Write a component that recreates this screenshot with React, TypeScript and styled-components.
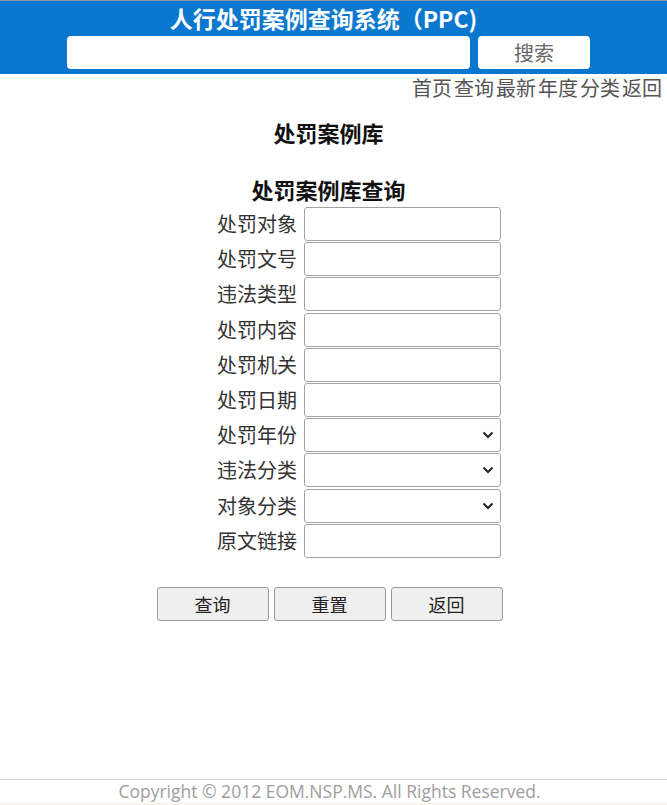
import React from "react";
import styled, { createGlobalStyle } from "styled-components";

const GlobalStyle = createGlobalStyle`
  html, body { margin: 0; padding: 0; background: #fff; }
  body { font-family: "Noto Sans CJK SC", "Noto Sans", sans-serif; }
  * { box-sizing: border-box; }
`;

const Page = styled.div`
  min-height: 100vh;
  display: flex;
  flex-direction: column;
`;

const Header = styled.header`
  background: #0a78cf;
  border-top: 1px solid #8a99a6;
  padding: 3px 0 5px;
`;

const Title = styled.h1`
  margin: 0;
  color: #fff;
  font-size: 23px;
  font-weight: 700;
  line-height: 29px;
  text-align: center;
  padding-right: 20px;
`;

const SearchRow = styled.div`
  display: flex;
  justify-content: center;
  gap: 8px;
  margin-top: 3px;
  padding-right: 10px;
`;

const SearchInput = styled.input`
  width: 403px;
  height: 33px;
  border: none;
  border-radius: 4px;
  background: #fff;
  outline: none;
`;

const SearchButton = styled.button`
  width: 112px;
  height: 33px;
  border: none;
  border-radius: 4px;
  background: #fff;
  color: #666;
  font-family: inherit;
  font-size: 20px;
  line-height: 33px;
  padding: 0;
`;

const Nav = styled.nav`
  display: flex;
  justify-content: flex-end;
  gap: 2px;
  padding-right: 5px;
  line-height: 28px;
`;

const NavLink = styled.a`
  color: #555;
  font-size: 20px;
  text-decoration: none;
`;

const Heading = styled.h2<{ $top: number }>`
  margin: ${(p) => p.$top}px 0 0;
  font-size: 22px;
  font-weight: 700;
  line-height: 30px;
  text-align: center;
  color: #111;
  padding-right: 10px;
`;

const Form = styled.form`
  display: grid;
  grid-template-columns: 1fr 197px 159px;
  column-gap: 7px;
  row-gap: 1.2px;
  margin-top: 3px;
`;

const Label = styled.label`
  grid-column: 1;
  text-align: right;
  font-size: 20px;
  line-height: 34px;
  color: #333;
`;

const Field = styled.div`
  grid-column: 2;
  position: relative;
  height: 34px;
`;

const TextInput = styled.input`
  width: 100%;
  height: 100%;
  border: 1px solid #a3a3a3;
  border-radius: 3px;
  background: #fff;
  outline: none;
`;

const Select = styled.select`
  width: 100%;
  height: 100%;
  border: 1px solid #a3a3a3;
  border-radius: 3px;
  background: #fff;
  appearance: none;
  outline: none;
`;

const Chevron = styled.svg`
  position: absolute;
  right: 7px;
  top: 13px;
  width: 12px;
  height: 8px;
  pointer-events: none;
`;

const ButtonRow = styled.div`
  display: flex;
  justify-content: center;
  gap: 5px;
  margin-top: 29px;
  padding-right: 8px;
`;

const ActionButton = styled.button`
  width: 112px;
  height: 34px;
  border: 1px solid #9a9a9a;
  border-radius: 3px;
  background: #efefef;
  color: #222;
  font-family: inherit;
  font-size: 18px;
  padding: 0;
`;

const Footer = styled.footer`
  margin-top: auto;
  border-top: 1px solid #d4d4d4;
  text-align: center;
  color: #9e9e9e;
  font-family: "Open Sans", "Noto Sans", sans-serif;
  font-size: 17.5px;
  line-height: 23px;
  border-bottom: 2px solid #fdf3ea;
  padding-right: 8px;
`;

const fields: { label: string; select?: boolean }[] = [
  { label: "处罚对象" },
  { label: "处罚文号" },
  { label: "违法类型" },
  { label: "处罚内容" },
  { label: "处罚机关" },
  { label: "处罚日期" },
  { label: "处罚年份", select: true },
  { label: "违法分类", select: true },
  { label: "对象分类", select: true },
  { label: "原文链接" },
];

const navItems = ["首页", "查询", "最新", "年度", "分类", "返回"];

export default function App() {
  return (
    <Page>
      <GlobalStyle />
      <Header>
        <Title>人行处罚案例查询系统（PPC)</Title>
        <SearchRow>
          <SearchInput />
          <SearchButton>搜索</SearchButton>
        </SearchRow>
      </Header>
      <Nav>
        {navItems.map((n) => (
          <NavLink key={n} href="#">
            {n}
          </NavLink>
        ))}
      </Nav>
      <Heading $top={15}>处罚案例库</Heading>
      <Heading $top={27}>处罚案例库查询</Heading>
      <Form onSubmit={(e) => e.preventDefault()}>
        {fields.map((f) => (
          <React.Fragment key={f.label}>
            <Label>{f.label}</Label>
            <Field>
              {f.select ? (
                <>
                  <Select>
                    <option></option>
                  </Select>
                  <Chevron viewBox="0 0 12 8">
                    <path d="M1.5 1.5 L6 6 L10.5 1.5" fill="none" stroke="#222" strokeWidth="2" />
                  </Chevron>
                </>
              ) : (
                <TextInput />
              )}
            </Field>
          </React.Fragment>
        ))}
      </Form>
      <ButtonRow>
        <ActionButton>查询</ActionButton>
        <ActionButton>重置</ActionButton>
        <ActionButton>返回</ActionButton>
      </ButtonRow>
      <Footer>Copyright © 2012 EOM.NSP.MS. All Rights Reserved.</Footer>
    </Page>
  );
}
